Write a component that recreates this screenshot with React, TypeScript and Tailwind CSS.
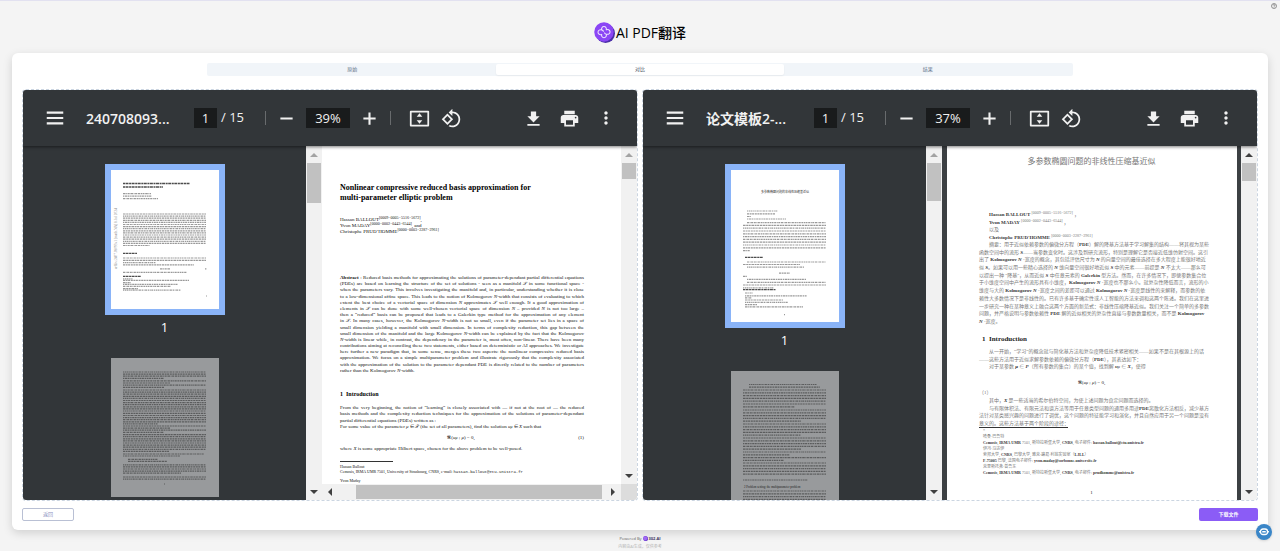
import type { ReactNode } from 'react'

const ABSTRACT_EN = [
  ': Reduced basis methods for approximating the solutions of parameter-dependant partial differential equations',
  '(PDEs) are based on learning the structure of the set of solutions - seen as a manifold 𝒮 in some functional space -',
  'when the parameters vary. This involves investigating the manifold and, in particular, understanding whether it is close',
  'to a low-dimensional affine space. This leads to the notion of Kolmogorov N-width that consists of evaluating to which',
  'extent the best choice of a vectorial space of dimension N approximates 𝒮 well enough. If a good approximation of',
  'elements in 𝒮 can be done with some well-chosen vectorial space of dimension N – provided N is not too large –',
  'then a “reduced” basis can be proposed that leads to a Galerkin type method for the approximation of any element',
  'in 𝒮. In many cases, however, the Kolmogorov N-width is not so small, even if the parameter set lies in a space of',
  'small dimension yielding a manifold with small dimension. In terms of complexity reduction, this gap between the',
  'small dimension of the manifold and the large Kolmogorov N-width can be explained by the fact that the Kolmogorov',
  'N-width is linear while, in contrast, the dependency in the parameter is, most often, non-linear. There have been many',
  'contributions aiming at reconciling these two statements, either based on deterministic or AI approaches. We investigate',
  'here further a new paradigm that, in some sense, merges these two aspects: the nonlinear compressive reduced basis',
  'approximation. We focus on a simple multiparameter problem and illustrate rigorously that the complexity associated',
  'with the approximation of the solution to the parameter dependant PDE is directly related to the number of parameters',
  'rather than the Kolmogorov N-width.',
]

const ABSTRACT_ZH = [
  '摘要：用于近似依赖参数的偏微分方程（PDE）解的降基方法基于学习解集的结构——将其视为某些',
  '函数空间中的流形 S——当参数变化时。这涉及到研究流形，特别是理解它是否接近低维仿射空间。这引',
  '出了 Kolmogorov N -宽度的概念，其包括评估尺寸为 N 的向量空间的最佳选择在多大程度上能很好地近',
  '似 S。如果可以用一些精心选择的 N 维向量空间很好地近似 S 中的元素——前提是 N 不太大——那么可',
  '以提出一种 "降基"，从而近似 S 中任意元素的 Galerkin 型方法。然而，在许多情况下，即便参数集合位',
  '于小维度空间中产生的流形具有小维度，Kolmogorov N -宽度也不那么小。就复杂性降低而言，流形的小',
  '维度与大的 Kolmogorov N -宽度之间的差距可以通过 Kolmogorov N -宽度是线性的来解释，而参数的依',
  '赖性大多数情况下是非线性的。已有许多基于确定性或人工智能的方法来调和这两个陈述。我们在这里进',
  '一步研究一种在某种意义上融合这两个方面的新范式：非线性压缩降基近似。我们关注一个简单的多参数',
  '问题，并严格说明与参数依赖性 PDE 解的近似相关的复杂性直接与参数数量相关，而不是 Kolmogorov',
  'N -宽度。',
]

// Latin words are set bold and single-letter symbols italic inside the translated text
function mixed(text: string) {
  return text.split(/([A-Za-z][A-Za-z0-9'.@-]*)/).map((part, i) => {
    if (i % 2 === 0) return part
    if (part.length === 1) return <b key={i} className="italic text-[#3a3a3a]">{part}</b>
    return <b key={i} className="text-[#3a3a3a]">{part}</b>
  })
}

function symbols(text: string) {
  return text.split(/\b(N|X)\b/).map((part, i) => (i % 2 ? <i key={i}>{part}</i> : part))
}

function Line({ children, full = true, indent = false }: { children: ReactNode; full?: boolean; indent?: boolean }) {
  return (
    <p
      className={`whitespace-nowrap leading-[6px] ${full ? '[text-align-last:justify]' : ''} ${indent ? 'pl-[10px]' : ''}`}
    >
      {children}
    </p>
  )
}

type Row = { y: number; x?: number; w: number; bold?: boolean }

function rows(from: number, count: number, step: number, shortEvery = 0): Row[] {
  return Array.from({ length: count }, (_, i) => ({
    y: from + i * step,
    w: shortEvery && i % shortEvery === shortEvery - 1 ? 30 + ((i * 17) % 40) : 83,
  }))
}

const THUMB_EN_1: Row[] = [
  { y: 13.5, w: 67, bold: true },
  { y: 17, w: 40, bold: true },
  { y: 23.7, w: 28 },
  { y: 26.2, w: 29 },
  { y: 28.6, w: 35 },
  ...rows(44, 15, 2.1),
  { y: 75.5, w: 27 },
  { y: 83.3, w: 14, bold: true },
  ...rows(88, 2, 2.3),
  { y: 92.6, w: 33 },
  { y: 94.9, w: 71 },
  { y: 98.8, x: 49, w: 10 },
  { y: 98.8, x: 94, w: 2 },
  { y: 102.4, w: 64 },
  { y: 106.4, w: 18, bold: true },
  { y: 108.8, w: 10 },
  { y: 110.4, w: 66 },
  { y: 112.6, w: 8 },
  { y: 114.4, w: 55 },
  { y: 116.4, w: 48 },
  { y: 118.6, w: 15 },
  { y: 120.2, w: 58 },
  { y: 126, x: 95, w: 1 },
]

const THUMB_EN_2: Row[] = [
  ...rows(14, 4, 2.1, 4),
  ...rows(22.8, 4, 2.2, 2),
  ...rows(32, 11, 2.1),
  ...rows(55.4, 6, 2.1, 6),
  ...rows(68, 4, 2.1, 2),
  ...rows(76.6, 9, 2.1, 9),
  { y: 96, w: 81 },
  { y: 98, w: 57 },
  { y: 101.4, x: 17, w: 30 },
  { y: 103.4, x: 17, w: 39 },
  ...rows(106.8, 5, 2.1, 5),
  ...rows(119, 2, 2.1),
  { y: 126, x: 53, w: 1 },
]

const THUMB_ZH_1: Row[] = [
  { y: 41, x: 16, w: 31 },
  { y: 43.8, x: 16, w: 28 },
  { y: 46.5, x: 16, w: 4 },
  { y: 49, x: 16, w: 39 },
  { y: 52.6, x: 16, w: 79 },
  ...rows(55.4, 9, 2.8),
  { y: 80.6, w: 7 },
  { y: 87.3, x: 14, w: 18, bold: true },
  { y: 92, x: 16, w: 79 },
  { y: 94.5, w: 57 },
  { y: 97.2, x: 16, w: 57 },
  { y: 103.2, x: 48, w: 11 },
  { y: 106.4, w: 4 },
  { y: 109.4, x: 16, w: 59 },
  { y: 112.4, x: 16, w: 79 },
  { y: 115, w: 83 },
  { y: 117.8, w: 31 },
  { y: 119.7, w: 33, bold: true },
  { y: 123, x: 14, w: 8 },
  { y: 125.8, x: 14, w: 62 },
  { y: 127.8, x: 14, w: 7 },
  { y: 130, x: 14, w: 38 },
  { y: 132.4, x: 14, w: 43 },
  { y: 134.6, x: 14, w: 12 },
  { y: 136.8, x: 14, w: 58 },
  { y: 144.6, x: 53, w: 1 },
]

const THUMB_ZH_2: Row[] = [
  { y: 13.5, x: 18, w: 68 },
  { y: 16.2, x: 18, w: 71 },
  ...rows(19, 7, 2.8, 7),
  ...rows(39, 5, 2.8, 5),
  ...rows(53, 5, 2.8, 5),
  ...rows(67, 5, 2.8, 5),
  ...rows(81, 4, 2.8, 2),
  ...rows(92, 5, 2.8),
  { y: 109, w: 65 },
  ...rows(120, 12, 2.8, 6),
]

function PagePreview({ data, height, children }: { data: Row[]; height: number; children?: ReactNode }) {
  return (
    <svg viewBox={`0 0 108 ${height}`} className="block w-full" aria-hidden="true">
      {data.map((r, i) => (
        <line
          key={i}
          x1={r.x ?? 12}
          x2={(r.x ?? 12) + r.w}
          y1={r.y}
          y2={r.y}
          stroke="#000"
          strokeWidth={r.bold ? 1.3 : 1.2}
          strokeOpacity={r.bold ? 0.7 : 0.4}
          strokeDasharray={r.bold ? '2 0.5 3 0.6' : `${1.4 + (i % 3) * 0.6} 0.6 ${1 + ((i * 2) % 4) * 0.5} 0.5 2 0.7`}
        />
      ))}
      {children}
    </svg>
  )
}

function Icon({ d, className = 'size-[21px]' }: { d: string; className?: string }) {
  return (
    <svg viewBox="0 0 24 24" fill="currentColor" className={`shrink-0 ${className}`} aria-hidden="true">
      <path d={d} />
    </svg>
  )
}

const icons = {
  menu: 'M3 19h18v-2.3H3V19zm0-5.8h18v-2.4H3v2.4zM3 5v2.3h18V5H3z',
  minus: 'M19 13.200H5v-2.400h14v2.400z',
  plus: 'M19 13.200h-5.800V19h-2.400v-5.800H5v-2.400h5.800V5h2.400v5.800H19v2.400z',
  fit: 'M22 3H2c-.6 0-1 .4-1 1v16c0 .6.4 1 1 1h20c.6 0 1-.4 1-1V4c0-.6-.4-1-1-1zm-1 16H3V5h18v14zM12 6L8.8 10h6.4L12 6zm0 12l3.200-4H8.800L12 18z',
  rotate:
    'M7.340 6.410L.860 12.900l6.490 6.480 6.490-6.480-6.500-6.490zM3.690 12.900l3.660-3.660L11 12.900l-3.660 3.660-3.650-3.660zm15.670-6.260C17.610 4.880 15.300 4 13 4V.760L8.760 5 13 9.240V6c1.790 0 3.580.680 4.950 2.050 2.730 2.730 2.730 7.170 0 9.900C16.580 19.320 14.790 20 13 20c-.970 0-1.940-.210-2.840-.610l-1.490 1.490C10.020 21.620 11.510 22 13 22c2.300 0 4.610-.880 6.360-2.640 3.520-3.510 3.520-9.210 0-12.720z',
  download: 'M19 9.500h-4V4H9v5.500H5l7 7 7-7zM5 18.300v2h14v-2H5z',
  print:
    'M19 8H5c-1.660 0-3 1.340-3 3v6h4v4h12v-4h4v-6c0-1.660-1.340-3-3-3zm-3 11H8v-5h8v5zm3-7c-.550 0-1-.450-1-1s.450-1 1-1 1 .450 1 1-.450 1-1 1zM18 3H6v4h12V3z',
  more: 'M12 8c1.100 0 2-.900 2-2s-.900-2-2-2-2 .900-2 2 .900 2 2 2zm0 2c-1.100 0-2 .900-2 2s.900 2 2 2 2-.900 2-2-.900-2-2-2zm0 6c-1.100 0-2 .900-2 2s.900 2 2 2 2-.900 2-2-.900-2-2-2z',
}

function ToolButton({ label, d, size }: { label: string; d: string; size?: string }) {
  return (
    <button type="button" aria-label={label} className="flex w-[21px] shrink-0 items-center justify-center">
      <Icon d={d} className={size} />
    </button>
  )
}

function Toolbar({ title, zoom }: { title: string; zoom: string }) {
  return (
    <div className="relative z-10 flex h-14 shrink-0 items-center bg-[#323639] px-[21px] font-['Open_Sans','Noto_Sans_CJK_SC',sans-serif] text-[13px] font-medium text-[#f1f1f1] shadow-[0_1px_3px_rgba(0,0,0,0.5)]">
      <ToolButton label="菜单" d={icons.menu} size="size-[22px]" />
      <span className="ml-[21px] w-[84px] shrink-0 whitespace-nowrap text-[14px] font-semibold">{title}</span>
      <input
        aria-label="页码"
        defaultValue="1"
        className="ml-6 h-5 w-[23px] shrink-0 bg-[#191b1c] text-center"
      />
      <span className="ml-1 w-[26px] shrink-0 whitespace-nowrap">/ 15</span>
      <span className="ml-[18px] h-[14px] w-px shrink-0 bg-[#686b6d]" />
      <span className="w-[10px] shrink-0" />
      <ToolButton label="缩小" d={icons.minus} />
      <input
        aria-label="缩放比例"
        defaultValue={zoom}
        className="mx-[9px] h-5 w-[44px] shrink-0 bg-[#191b1c] text-center"
      />
      <ToolButton label="放大" d={icons.plus} />
      <span className="ml-[10px] mr-[18px] h-[14px] w-px shrink-0 bg-[#686b6d]" />
      <ToolButton label="适合页面" d={icons.fit} />
      <span className="w-[11px] shrink-0" />
      <ToolButton label="逆时针旋转" d={icons.rotate} />
      <div className="ml-auto flex gap-[15px]">
        <ToolButton label="下载" d={icons.download} />
        <ToolButton label="打印" d={icons.print} />
        <ToolButton label="更多" d={icons.more} size="size-[20px]" />
      </div>
    </div>
  )
}

function Arrow({ dir, dim = false }: { dir: 'up' | 'down' | 'left' | 'right'; dim?: boolean }) {
  const d = { up: 'M0 6L4 2l4 4z', down: 'M0 2l4 4 4-4z', left: 'M6 0L2 4l4 4z', right: 'M2 0l4 4-4 4z' }[dir]
  return (
    <svg viewBox="0 0 8 8" className="size-2 shrink-0" fill={dim ? '#a3a3a3' : '#404040'} aria-hidden="true">
      <path d={d} />
    </svg>
  )
}

function VScroll({ thumb, scrolled = false }: { thumb: string; scrolled?: boolean }) {
  return (
    <div className="flex w-4 shrink-0 flex-col items-center justify-between bg-[#f1f1f1] pb-1 pt-[5px]">
      <div className="flex w-full flex-col items-center gap-[4px]">
        <Arrow dir="up" dim={!scrolled} />
        <div className={`w-[14px] bg-[#c1c1c1] ${thumb}`} />
      </div>
      <Arrow dir="down" />
    </div>
  )
}

function Sidebar({ first, second }: { first: ReactNode; second: ReactNode }) {
  return (
    <div className="flex w-[283px] shrink-0 flex-col items-center overflow-hidden bg-[#323639] pt-[18px]">
      <button type="button" aria-label="第 1 页" className="w-[120px] shrink-0 border-[6px] border-[#8ab4f8] bg-white">
        {first}
      </button>
      <span className="h-[43px] shrink-0 font-['Open_Sans',sans-serif] text-[13px] leading-[24px] text-white">1</span>
      <button type="button" aria-label="第 2 页" className="w-[108px] shrink-0 bg-[#989a9c]">
        {second}
      </button>
    </div>
  )
}

function Viewer({ title, zoom, children }: { title: string; zoom: string; children: ReactNode }) {
  return (
    <section className="flex min-w-0 flex-1 flex-col overflow-hidden rounded-sm border border-dashed border-[#cbd5e1]">
      <Toolbar title={title} zoom={zoom} />
      <div className="flex min-h-0 flex-1">{children}</div>
    </section>
  )
}

function Sup({ children }: { children: string }) {
  return <span className="relative -top-[2px] text-[4px]">{children}</span>
}

function EnglishPage() {
  return (
    <article className="min-h-0 flex-1 overflow-hidden bg-white pl-[18px] pr-[37px] pt-[37px] font-['Liberation_Serif',serif] text-[5px] text-[#111]">
      <h2 className="whitespace-nowrap text-[8px] font-bold leading-[10px] text-black">
        Nonlinear compressive reduced basis approximation for
        <br />
        multi-parameter elliptic problem
      </h2>
      <div className="mt-[14px]">
        <Line full={false}>Hassan BALLOUT<Sup>[0009−0005−5516−5672]</Sup>,</Line>
        <Line full={false}>Yvon MADAY<Sup>[0000−0002−0443−6544]</Sup>, and</Line>
        <Line full={false}>Christophe PRUD’HOMME<Sup>[0000−0003−2287−2961]</Sup></Line>
      </div>
      <div className="mt-10 flex h-[99px] flex-col justify-between">
        {ABSTRACT_EN.map((text, i) => (
          <Line key={i} full={i < ABSTRACT_EN.length - 1}>
            {i === 0 && <b>Abstract </b>}
            {symbols(text)}
          </Line>
        ))}
      </div>
      <h3 className="mt-4 text-[6px] font-bold leading-[8px] text-black">1&nbsp; Introduction</h3>
      <div className="mt-[7px] flex h-[25px] flex-col justify-between">
        <Line>From the very beginning, the notion of “learning” is closely associated with — if not at the root of — the reduced</Line>
        <Line>basis methods and the complexity reduction techniques for the approximation of the solutions of parameter-dependant</Line>
        <Line full={false}>partial differential equations (PDEs) written as :</Line>
        <Line full={false}>
          For some value of the parameter <i>μ</i> ∈ 𝒫 (the set of all parameters), find the solution <i>u<span className="text-[4px]">μ</span></i> ∈ <i>X</i> such that
        </Line>
      </div>
      <div className="mt-[5px] flex justify-between leading-[6px]">
        <span className="ml-[44%]">
          𝕽(<i>u<span className="text-[4px]">μ</span></i> ; <i>μ</i>) = 0,
        </span>
        <span>(1)</span>
      </div>
      <div className="mt-[5px]">
        <Line full={false}>where <i>X</i> is some appropriate Hilbert space, chosen for the above problem to be well-posed.</Line>
      </div>
      <div className="mt-[9px] w-[53px] border-t border-[#333]" />
      <div className="mt-[2px] text-[4px]">
        <p className="leading-[5px]">Hassan Ballout</p>
        <p className="whitespace-nowrap leading-[5px]">
          Cemosis, IRMA UMR 7501, University of Strasbourg, CNRS, e-mail:{' '}
          <span className="font-['Liberation_Mono',monospace]">hassan.ballout@etu.unistra.fr</span>
        </p>
        <p className="mt-[3px] leading-[5px]">Yvon Maday</p>
        <p className="whitespace-nowrap leading-[5px]">
          Sorbonne Université, CNRS, Université Paris Cité, Laboratoire Jacques-Louis Lions (LJLL),
        </p>
      </div>
    </article>
  )
}

function ChinesePage() {
  return (
    <article className="min-w-0 flex-1 overflow-hidden bg-white pl-8 pr-[33px] pt-[10px] font-['Liberation_Serif','Noto_Sans_CJK_SC',serif] text-[5px] text-[#777]">
      <h2 className="whitespace-nowrap text-center text-[8px] leading-3">多参数椭圆问题的非线性压缩基近似</h2>
      <div className="mt-11 flex h-[29px] flex-col justify-between">
        <Line full={false} indent>{mixed('Hassan BALLOUT')} <Sup>[0009−0005−5516−5672]</Sup> ，</Line>
        <Line full={false} indent>{mixed('Yvon MADAY')} <Sup>[0000−0002−0443−6544]</Sup> ，</Line>
        <Line full={false} indent>以及</Line>
        <Line full={false} indent>{mixed("Christophe PRUD'HOMME")} <Sup>[0000−0003−2287−2961]</Sup></Line>
      </div>
      <div className="mt-px flex h-[83px] flex-col justify-between">
        {ABSTRACT_ZH.map((text, i) => (
          <Line key={i} full={i < ABSTRACT_ZH.length - 1} indent={i === 0}>
            {mixed(text)}
          </Line>
        ))}
      </div>
      <h3 className="ml-[3px] mt-[10px] text-[7px] font-bold leading-[8px] text-[#222]">1&nbsp; Introduction</h3>
      <div className="mt-[6px] flex h-[21px] flex-col justify-between">
        <Line indent>从一开始，“学习”的概念就与简化基方法和复杂度降低技术紧密相关——如果不是在其根源上的话</Line>
        <Line full={false}>{mixed('——这些方法用于近似求解参数依赖的偏微分方程（PDE），其表达如下：')}</Line>
        <Line full={false} indent>
          对于某参数 <b className="italic text-[#222]">μ</b> ∈ {mixed('P（所有参数的集合）的某个值，找到解 u')}
          <b className="text-[4px] italic">μ</b> ∈ {mixed('X，使得')}
        </Line>
      </div>
      <p className="mt-[10px] text-center leading-[6px] text-[#222]">
        𝕽(<i>u<span className="text-[4px]">μ</span></i> ; <i>μ</i>) = 0,
      </p>
      <p className="mt-1 leading-[6px]">（1）</p>
      <div className="mt-[2px] flex h-[29px] flex-col justify-between">
        <Line full={false} indent>{mixed('其中，X 是一些适当的希尔伯特空间，为使上述问题为良定问题而选择的。')}</Line>
        <Line indent>{mixed('与有限体积法、有限元法和谱方法等用于任意类型问题的通用多用途PDE离散化方法相反，减少基方')}</Line>
        <Line>法针对某类感兴趣的问题进行了调优，这个问题的特征能学习和演化，并且自然应用于另一个问题是没有</Line>
        <Line full={false}>意义的。这些方法基于两个阶段的途径：</Line>
      </div>
      <div className="w-[89px] border-t border-[#333]" />
      <div className="ml-1 text-[4px] *:whitespace-nowrap *:leading-[6px]">
        <p>*</p>
        <p>哈桑·巴鲁特</p>
        <p>{mixed('Cemosis, IRMA UMR 7501, 斯特拉斯堡大学, CNRS, 电子邮件: hassan.ballout@etu.unistra.fr')}</p>
        <p>伊冯·马达伊</p>
        <p>{mixed('索邦大学, CNRS, 巴黎大学, 雅克-路易·利翁实验室（LJLL）')}</p>
        <p>{mixed('F-75005 巴黎, 法国电子邮件: yvon.maday@sorbonne-universite.fr')}</p>
        <p>克里斯托弗·普鲁东</p>
        <p>{mixed('Cemosis, IRMA UMR 7501, 斯特拉斯堡大学, CNRS, 电子邮件: prudhomme@unistra.fr')}</p>
      </div>
      <p className="mt-[14px] text-center leading-[6px] text-[#222]">1</p>
    </article>
  )
}

function Logo({ className }: { className: string }) {
  return (
    <svg viewBox="0 0 40 40" className={className} aria-hidden="true">
      <circle cx="22" cy="22" r="18" fill="#4b2fa8" />
      <circle cx="19" cy="19" r="18.500" fill="#8b46f5" />
      <g fill="none" stroke="#fff" strokeWidth="2" opacity="0.85">
        <path d="M15 15.500a4.600 4.600 0 1 1 8 0M23.500 15a4.600 4.600 0 1 1 .500 8M23 23a4.600 4.600 0 1 1-8 0M14.500 23.500a4.600 4.600 0 1 1 0-8" />
        <path d="M15 15.500q3 0 3 3M23 23q-3 0-3-3" />
      </g>
    </svg>
  )
}

export default function App() {
  return (
    <div className="flex h-screen flex-col border-t border-[#e2e1f0] bg-[#f4f4f4] font-['Open_Sans','Noto_Sans_CJK_SC',sans-serif]">
      <header className="relative flex h-[52px] shrink-0 items-center justify-center pt-[10px]">
        <Logo className="size-[21px]" />
        <h1 className="ml-px text-[14px] font-medium text-black">AI PDF翻译</h1>
        <button type="button" aria-label="帮助" className="absolute right-[3px] top-[2px]">
          <svg viewBox="0 0 12 12" className="size-[6px]" fill="none" stroke="#555" strokeWidth="1.200" aria-hidden="true">
            <circle cx="6" cy="6" r="5" />
            <path d="M4.300 4.800a1.700 1.700 0 1 1 2.400 1.600q-.700.300-.700 1M6 8.300v1" />
          </svg>
        </button>
      </header>

      <main className="relative mx-3 flex min-h-0 flex-1 flex-col rounded-md bg-white px-[10px] pb-[9px] pt-[10px] shadow-[0_3px_10px_rgba(0,0,0,0.15)]">
        <div role="tablist" className="mx-auto grid h-[13px] w-[70%] shrink-0 grid-cols-3 rounded-xs bg-[#f1f5f9] p-px text-[5px] text-[#64748b]">
          <button type="button" role="tab" aria-selected="false">原始</button>
          <button type="button" role="tab" aria-selected="true" className="rounded-xs bg-white text-[#334155] shadow-xs">对比</button>
          <button type="button" role="tab" aria-selected="false">结果</button>
        </div>

        <div className="mt-[13px] flex min-h-0 flex-1 gap-1">
          <Viewer title="240708093..." zoom="39%">
            <Sidebar
              first={
                <PagePreview data={THUMB_EN_1} height={139}>
                  <text transform="translate(6 99) rotate(-90)" fontSize="3.500" fill="#888" fontFamily="Liberation Serif">
                    arXiv:2407.08093v1 [math.NA] 8 Jul 2024
                  </text>
                </PagePreview>
              }
              second={<PagePreview data={THUMB_EN_2} height={139} />}
            />
            <VScroll thumb="h-10" />
            <div className="flex min-w-0 flex-1 flex-col">
              <div className="flex min-h-0 flex-1">
                <EnglishPage />
                <VScroll thumb="h-4" />
              </div>
              <div className="flex h-4 shrink-0">
                <div className="flex flex-1 items-center bg-[#f1f1f1] px-1">
                  <Arrow dir="left" />
                  <div className="ml-[22px] mr-[7px] h-[14px] flex-1 bg-[#c1c1c1]" />
                  <Arrow dir="right" />
                </div>
                <div className="w-4 bg-[#dcdcdc]" />
              </div>
            </div>
          </Viewer>

          <Viewer title="论文模板2-..." zoom="37%">
            <Sidebar
              first={
                <PagePreview data={THUMB_ZH_1} height={152}>
                  <text x="54" y="23" textAnchor="middle" fontSize="3" fill="#333" fontFamily="Noto Sans CJK SC">
                    多参数椭圆问题的非线性压缩基近似
                  </text>
                </PagePreview>
              }
              second={
                <PagePreview data={THUMB_ZH_2} height={152}>
                  <text x="13" y="116.500" fontSize="3" fill="#222" fontFamily="Liberation Serif">
                    2 Problem setting: the multiparameter problem
                  </text>
                </PagePreview>
              }
            />
            <VScroll thumb="h-[38px]" />
            <div className="flex min-w-0 flex-1 bg-[#3c4043] pl-[5px] pr-1">
              <ChinesePage />
            </div>
            <VScroll thumb="h-[18px]" scrolled />
          </Viewer>
        </div>

        <div className="mt-[7px] flex shrink-0 justify-between text-[5px]">
          <button type="button" className="h-[13px] w-[52px] rounded-xs border border-[#b9c0d4] bg-white text-[#8b8fc0]">返回</button>
          <button type="button" className="h-[13px] w-[59px] rounded-xs bg-[#8b5cf6] font-bold text-white">下载文件</button>
        </div>

        <button
          type="button"
          aria-label="客服"
          className="absolute -bottom-[10px] -right-1 flex size-4 items-center justify-center rounded-full bg-[#3a86c8] shadow"
        >
          <svg viewBox="0 0 20 20" className="size-[10px]" fill="none" stroke="#fff" strokeWidth="2.600" aria-hidden="true">
            <rect x="3" y="4" width="14" height="11" rx="5" />
            <path d="M6.500 9.500h7M1.500 8v3M18.500 8v3" />
          </svg>
        </button>
      </main>

      <footer className="flex h-[21px] shrink-0 flex-col items-center pt-[5px] text-[4px] text-[#666]">
        <div className="flex items-center gap-px leading-[7px]">
          <span>Powered By</span>
          <Logo className="size-[5px]" />
          <a href="#" className="font-bold text-[#3b3663]">302.AI</a>
        </div>
        <p className="mt-px leading-[7px] text-[#b5b5b5]">内容由AI生成，仅供参考</p>
      </footer>
    </div>
  )
}
